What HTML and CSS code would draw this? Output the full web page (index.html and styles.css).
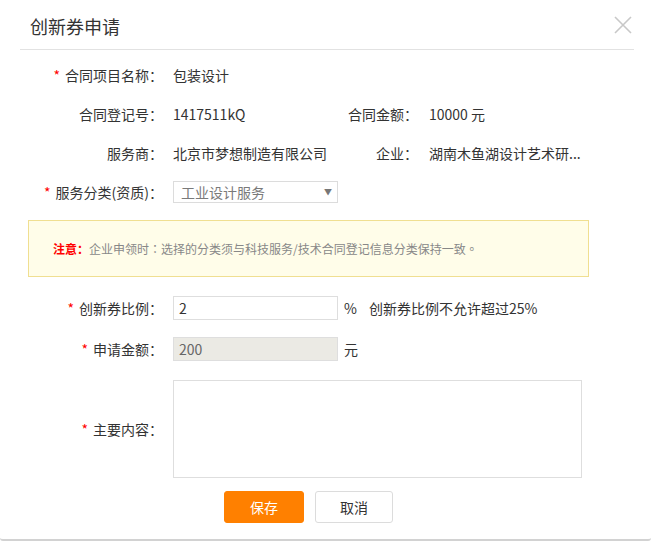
FILE: index.html
```html
<!DOCTYPE html>
<html lang="zh-CN">
<head>
<meta charset="utf-8">
<title>创新券申请</title>
<link rel="stylesheet" href="styles.css">
</head>
<body>
<div class="dialog">
  <div class="dialog-header">
    <h1 class="dialog-title">创新券申请</h1>
    <span class="close-btn" aria-label="关闭">
      <svg width="18" height="18" viewBox="0 0 18 18"><path d="M1 1 L17 17 M17 1 L1 17" stroke="#c8c8c8" stroke-width="1.6" fill="none"/></svg>
    </span>
  </div>
  <div class="form">
    <div class="row">
      <div class="label"><span class="req">*</span>合同项目名称<span class="colon">：</span></div>
      <div class="value">包装设计</div>
    </div>
    <div class="row">
      <div class="label">合同登记号<span class="colon">：</span></div>
      <div class="value col1">1417511kQ</div>
      <div class="label2">合同金额<span class="colon">：</span></div>
      <div class="value">10000 元</div>
    </div>
    <div class="row">
      <div class="label">服务商<span class="colon">：</span></div>
      <div class="value col1">北京市梦想制造有限公司</div>
      <div class="label2">企业<span class="colon">：</span></div>
      <div class="value">湖南木鱼湖设计艺术研...</div>
    </div>
    <div class="row">
      <div class="label"><span class="req">*</span>服务分类(资质)<span class="colon">：</span></div>
      <div class="select"><span>工业设计服务</span><span class="arrow">▼</span></div>
    </div>
    <div class="notice"><b class="notice-key">注意<span class="colon">：</span></b>企业申领时<span class="colon">：</span>选择的分类须与科技服务/技术合同登记信息分类保持一致<span class="colon">。</span></div>
    <div class="row row-ratio">
      <div class="label"><span class="req">*</span>创新券比例<span class="colon">：</span></div>
      <div class="input">2</div>
      <span class="unit">%</span>
      <span class="hint">创新券比例不允许超过25%</span>
    </div>
    <div class="row row-amount">
      <div class="label"><span class="req">*</span>申请金额<span class="colon">：</span></div>
      <div class="input input-disabled">200</div>
      <span class="unit">元</span>
    </div>
    <div class="row row-area">
      <div class="label"><span class="req">*</span>主要内容<span class="colon">：</span></div>
      <div class="textarea"></div>
    </div>
    <div class="actions">
      <button class="btn btn-primary">保存</button>
      <button class="btn btn-default">取消</button>
    </div>
  </div>
</div>
</body>
</html>
```
FILE: styles.css
```css
html, body {
  margin: 0;
  padding: 0;
  background: #fff;
}
body {
  font-family: "Microsoft YaHei", "Noto Sans CJK SC", "Noto Sans", sans-serif;
  font-size: 14px;
  color: #333;
}
.dialog {
  height: 539px;
  border-bottom: 2px solid #d2d2d2;
  border-radius: 0 0 3px 3px;
  background: #fff;
}
.dialog-header {
  display: flex;
  align-items: center;
  justify-content: space-between;
  height: 49px;
  margin: 0 17px 0 20px;
  padding: 0 2px 0 10px;
  border-bottom: 1px solid #e2e2e2;
}
.dialog-title {
  margin: 0;
  font-size: 18px;
  font-weight: normal;
  color: #333;
  line-height: 1;
  padding-top: 2px;
}
.close-btn {
  display: flex;
  width: 18px;
  height: 18px;
}
.form {
  padding: 5px 0 0 23px;
}
.row {
  display: flex;
  align-items: center;
  height: 39px;
}
.label {
  width: 140px;
  margin-right: 10px;
  text-align: right;
  white-space: nowrap;
}
.colon {
  font-family: "Noto Sans CJK TC", "Noto Sans CJK SC", sans-serif;
}
.req {
  color: #f00;
  margin-right: 5px;
}
.value {
  white-space: nowrap;
}
.col1 {
  width: 167px;
}
.label2 {
  width: 78px;
  margin-right: 11px;
  text-align: right;
}
.select {
  box-sizing: border-box;
  width: 165px;
  height: 22px;
  border: 1px solid #dcdcdc;
  display: flex;
  align-items: center;
  justify-content: space-between;
  padding: 0 5px 0 7px;
  color: #7a7a7a;
}
.arrow {
  font-size: 8px;
  color: #777;
}
.notice {
  box-sizing: border-box;
  width: 561px;
  height: 57px;
  margin: 9px 0 0 5px;
  padding-left: 24px;
  display: flex;
  align-items: center;
  background: #fffde9;
  border: 1px solid #f0df91;
  font-size: 12px;
  color: #888;
}
.notice-key {
  color: #f00;
  font-weight: bold;
}
.row-ratio {
  margin-top: 11px;
  height: 40px;
}
.row-amount {
  height: 41px;
}
.input {
  box-sizing: border-box;
  width: 165px;
  height: 24px;
  border: 1px solid #dedede;
  padding: 0 5px;
  line-height: 22px;
  color: #333;
}
.input-disabled {
  background: #ebeae4;
  color: #666;
}
.unit {
  margin-left: 6px;
}
.hint {
  margin-left: 12px;
}
.row-area {
  height: auto;
  margin-top: 11px;
}
.textarea {
  box-sizing: border-box;
  width: 409px;
  height: 98px;
  border: 1px solid #dedede;
}
.actions {
  display: flex;
  gap: 11px;
  margin: 13px 0 0 201px;
}
.btn {
  box-sizing: border-box;
  height: 32px;
  border-radius: 3px;
  font-family: inherit;
  font-size: 14px;
  padding: 0;
  cursor: pointer;
}
.btn-primary {
  width: 80px;
  background: #ff8000;
  border: 1px solid #ff8000;
  color: #fff;
}
.btn-default {
  width: 78px;
  background: #fff;
  border: 1px solid #dcdcdc;
  color: #333;
}
```
